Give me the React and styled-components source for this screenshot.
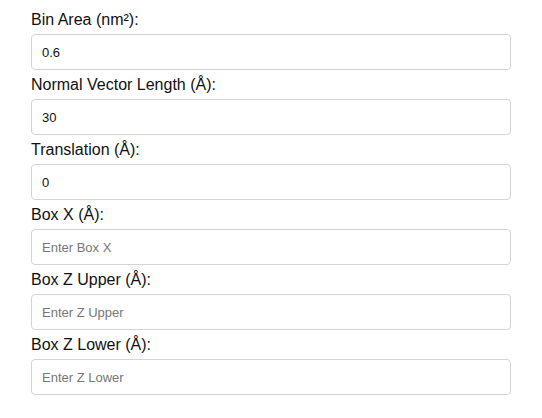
import React from "react";
import styled, { createGlobalStyle } from "styled-components";

const GlobalStyle = createGlobalStyle`
  html, body {
    margin: 0;
    padding: 0;
    background: #ffffff;
  }
  body {
    font-family: "Liberation Sans", Arial, Helvetica, sans-serif;
  }
`;

const Form = styled.div`
  padding: 10px 0 0 31px;
  width: 480px;
`;

const Field = styled.div`
  display: flex;
  flex-direction: column;
  margin-bottom: 5px;
`;

const Label = styled.label`
  display: block;
  font-size: 16px;
  line-height: 19px;
  color: #111;
  margin-bottom: 5px;
`;

const Input = styled.input`
  box-sizing: border-box;
  width: 480px;
  height: 36px;
  padding: 0 10px;
  border: 1px solid #d4d4d4;
  border-radius: 4px;
  font-family: "Liberation Sans", Arial, Helvetica, sans-serif;
  font-size: 13px;
  color: #111;
  background: #fff;
  outline: none;
  &::placeholder {
    color: #767676;
  }
`;

const fields = [
  { label: "Bin Area (nm²):", value: "0.6" },
  { label: "Normal Vector Length (Å):", value: "30" },
  { label: "Translation (Å):", value: "0" },
  { label: "Box X (Å):", placeholder: "Enter Box X" },
  { label: "Box Z Upper (Å):", placeholder: "Enter Z Upper" },
  { label: "Box Z Lower (Å):", placeholder: "Enter Z Lower" },
];

export default function App() {
  return (
    <>
      <GlobalStyle />
      <Form>
        {fields.map((f, i) => (
          <Field key={i}>
            <Label htmlFor={`f${i}`}>{f.label}</Label>
            <Input
              id={`f${i}`}
              type="text"
              defaultValue={f.value}
              placeholder={f.placeholder}
            />
          </Field>
        ))}
      </Form>
    </>
  );
}
